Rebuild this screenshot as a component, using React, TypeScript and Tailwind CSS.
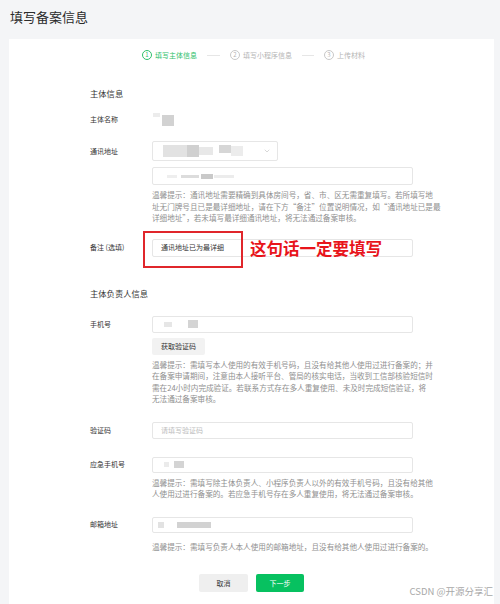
import { ChevronDown } from 'lucide-react'
import type { ReactNode } from 'react'

const font = "font-['Noto_Sans_CJK_SC','Noto_Sans',sans-serif]"

function Blur({ w, h, c, ml = 0, mt = 0 }: { w: number; h: number; c: string; ml?: number; mt?: number }) {
  return <div className="shrink-0 blur-[0.6px]" style={{ width: w, height: h, background: c, marginLeft: ml, marginTop: mt }} />
}

function Label({ children, h }: { children: ReactNode; h: number }) {
  return (
    <div className="w-[62px] shrink-0 flex items-center text-[7px] text-[#353535]" style={{ height: h }}>
      {children}
    </div>
  )
}

function Hint({ lines, className = '' }: { lines: string[]; className?: string }) {
  return (
    <div className={`text-[7.6px] leading-[11.5px] text-[#8f8f8f] ${className}`}>
      {lines.map((l, i) => (
        <div key={i} className="whitespace-nowrap">{l}</div>
      ))}
    </div>
  )
}

function Box({ h, children }: { h: number; children?: ReactNode }) {
  return (
    <div
      className="w-[261px] border border-[#e6e6e6] rounded-[2px] bg-white flex items-center px-[8px] text-[7px] text-[#353535]"
      style={{ height: h }}
    >
      {children}
    </div>
  )
}

function Step({ n, text, active }: { n: string; text: string; active?: boolean }) {
  const color = active ? 'text-[#2fbf6b] border-[#2fbf6b]' : 'text-[#b5b5b5] border-[#c8c8c8]'
  return (
    <div className={`flex items-center gap-[3px] ${active ? 'text-[#2fbf6b]' : 'text-[#b5b5b5]'}`}>
      <div className={`w-[10px] h-[10px] rounded-full border flex items-center justify-center text-[6px] leading-none ${color}`}>{n}</div>
      <span className="text-[7px]">{text}</span>
    </div>
  )
}

export default function App() {
  return (
    <div className={`${font} w-[500px] h-[604px] overflow-hidden bg-[#f4f5f7] flex flex-col relative`}>
      <h1 className="pt-[10px] pl-[10px] text-[13px] leading-[14px] text-[#2b2b2b]">填写备案信息</h1>

      <div className="mt-[15px] ml-[9px] w-[485px] flex-1 bg-white flex flex-col">
        {/* stepper */}
        <div className="pt-[11px] h-[21px] flex items-center justify-center gap-[10px] pl-[4px]">
          <Step n="1" text="填写主体信息" active />
          <div className="w-[13px] h-px bg-[#e6e6e6]" />
          <Step n="2" text="填写小程序信息" />
          <div className="w-[12px] h-px bg-[#e6e6e6]" />
          <Step n="3" text="上传材料" />
        </div>

        <div className="pl-[81px] flex flex-col">
          <div className="mt-[28px] h-[10px] leading-[10px] text-[8.3px] text-[#353535]">主体信息</div>

          {/* 主体名称 */}
          <div className="mt-[15px] flex">
            <Label h={13}>主体名称</Label>
            <div className="flex items-start h-[13px]">
              <Blur w={7} h={4} c="#ececec" ml={1} />
              <Blur w={12} h={11} c="#d2d2d2" ml={2} mt={2} />
            </div>
          </div>

          {/* 通讯地址 */}
          <div className="mt-[15px] flex items-start">
            <Label h={20}>通讯地址</Label>
            <div className="flex flex-col">
              <div className="w-[126px] h-[20px] border border-[#e6e6e6] rounded-[2px] flex items-center pl-[10px] pr-[6px]">
                <Blur w={24} h={12} c="#e2e2e2" />
                <Blur w={12} h={12} c="#d0d0d0" />
                <Blur w={14} h={8} c="#e8e8e8" />
                <Blur w={12} h={8} c="#d6d6d6" ml={6} mt={-4} />
                <Blur w={12} h={10} c="#ececec" />
                <ChevronDown size={8} strokeWidth={1.5} className="ml-auto text-[#b0b0b0]" />
              </div>
              <div className="mt-[6px]">
                <Box h={18}>
                  <Blur w={10} h={3} c="#eeeeee" ml={6} />
                  <Blur w={18} h={3} c="#dcdcdc" ml={4} />
                  <Blur w={12} h={5} c="#c9c9c9" ml={2} />
                  <Blur w={20} h={3} c="#ececec" ml={1} />
                </Box>
              </div>
              <Hint
                className="mt-[4px]"
                lines={[
                  '温馨提示：通讯地址需要精确到具体房间号，省、市、区无需重复填写。若所填写地',
                  '址无门牌号且已是最详细地址，请在下方“备注”位置说明情况，如“通讯地址已是最',
                  '详细地址”，若未填写最详细通讯地址，将无法通过备案审核。',
                ]}
              />
            </div>
          </div>

          {/* 备注 */}
          <div className="mt-[15px] flex items-start">
            <Label h={18}>备注 (选填)</Label>
            <div className="relative">
              <Box h={18}>通讯地址已为最详细</Box>
              <div className="absolute left-[-9px] top-[-8px] w-[100px] h-[37px] border-2 border-[#e0262b]" />
              <div className="absolute left-[98px] top-[-1px] text-[16.5px] leading-[20px] font-bold text-[#e8141b] whitespace-nowrap">
                这句话一定要填写
              </div>
            </div>
          </div>

          <div className="mt-[31px] h-[10px] leading-[10px] text-[8.3px] text-[#353535]">主体负责人信息</div>

          {/* 手机号 */}
          <div className="mt-[18px] flex items-start">
            <Label h={17}>手机号</Label>
            <div className="flex flex-col">
              <Box h={17}>
                <Blur w={8} h={5} c="#e6e6e6" ml={3} />
                <Blur w={10} h={8} c="#d4d4d4" ml={16} />
              </Box>
              <button className="mt-[5px] w-[53px] h-[17px] bg-[#f2f2f2] rounded-[2px] text-[7px] text-[#353535]">获取验证码</button>
              <Hint
                className="mt-[4px]"
                lines={[
                  '温馨提示：需填写本人使用的有效手机号码，且没有给其他人使用过进行备案的；并',
                  '在备案申请期间，注意由本人接听平台、管局的核实电话，当收到工信部核验短信时',
                  '需在24小时内完成验证。若联系方式存在多人重复使用、未及时完成短信验证，将',
                  '无法通过备案审核。',
                ]}
              />
            </div>
          </div>

          {/* 验证码 */}
          <div className="mt-[17px] flex items-start">
            <Label h={17}>验证码</Label>
            <Box h={17}>
              <span className="text-[#bdbdbd]">请填写验证码</span>
            </Box>
          </div>

          {/* 应急手机号 */}
          <div className="mt-[18px] flex items-start">
            <Label h={16}>应急手机号</Label>
            <div className="flex flex-col">
              <Box h={16}>
                <Blur w={5} h={5} c="#ebebeb" ml={3} />
                <Blur w={10} h={7} c="#d4d4d4" ml={5} />
              </Box>
              <Hint
                className="mt-[4px]"
                lines={[
                  '温馨提示：需填写除主体负责人、小程序负责人以外的有效手机号码，且没有给其他',
                  '人使用过进行备案的。若应急手机号存在多人重复使用，将无法通过备案审核。',
                ]}
              />
            </div>
          </div>

          {/* 邮箱地址 */}
          <div className="mt-[17px] flex items-start">
            <Label h={16}>邮箱地址</Label>
            <div className="flex flex-col">
              <Box h={16}>
                <Blur w={6} h={6} c="#e2e2e2" ml={-3} />
                <Blur w={34} h={6} c="#d2d2d2" ml={13} />
              </Box>
              <Hint className="mt-[8px]" lines={['温馨提示：需填写负责人本人使用的邮箱地址，且没有给其他人使用过进行备案的。']} />
            </div>
          </div>
        </div>

        <div className="mt-[22px] flex justify-center gap-[8px]">
          <button className="w-[49px] h-[18px] bg-[#efefef] rounded-[2px] text-[7px] text-[#353535]">取消</button>
          <button className="w-[48px] h-[18px] bg-[#07c160] rounded-[2px] text-[7px] text-white">下一步</button>
        </div>
      </div>

      <div className="absolute right-[7px] bottom-[6px] text-[9.5px] text-[#a8a8a8] whitespace-nowrap">CSDN @开源分享汇</div>
    </div>
  )
}
